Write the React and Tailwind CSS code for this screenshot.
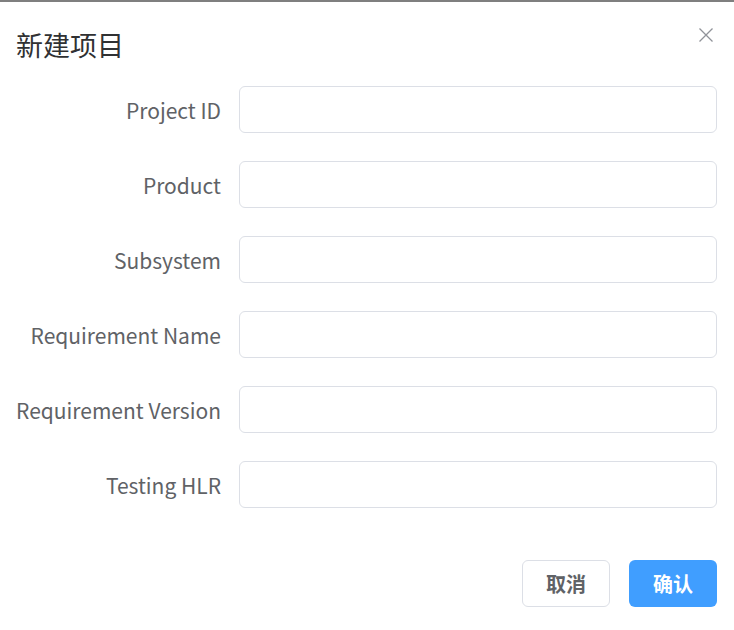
import React from "react";

const fields = [
  "Project ID",
  "Product",
  "Subsystem",
  "Requirement Name",
  "Requirement Version",
  "Testing HLR",
];

export default function App() {
  return (
    <div className="w-[734px] h-[630px] bg-white border-t-2 border-[#7f7f7f] font-['Noto_Sans_CJK_SC',sans-serif]">
      <div className="flex justify-between items-start pl-4 pr-[20px]">
        <h2 className="pt-[27px] text-[27px] leading-[32px] text-[#303133]">新建项目</h2>
        <button className="mt-[25px] text-[#909399]">
          <svg width="16" height="16" viewBox="0 0 16 16" fill="none" stroke="currentColor" strokeWidth="1.3">
            <path d="M1.5 1.5L14.5 14.5M14.5 1.5L1.5 14.5" />
          </svg>
        </button>
      </div>

      <div className="mt-[25px] flex flex-col gap-[28px] pr-[17px]">
        {fields.map((f) => (
          <div key={f} className="flex items-center h-[47px]">
            <label className="w-[221px] shrink-0 pt-[2px] text-right text-[21px] text-[#606266]">{f}</label>
            <input className="ml-[18px] flex-1 h-[47px] rounded-[6px] border border-[#dcdfe6] outline-none px-4" />
          </div>
        ))}
      </div>

      <div className="mt-[52px] flex justify-end gap-[19px] pr-[17px]">
        <button className="w-[88px] h-[47px] rounded-[6px] border border-[#dcdfe6] bg-white text-[20px] font-bold text-[#606266]">取消</button>
        <button className="w-[88px] h-[47px] rounded-[6px] bg-[#409eff] text-[20px] font-bold text-white">确认</button>
      </div>
    </div>
  );
}
